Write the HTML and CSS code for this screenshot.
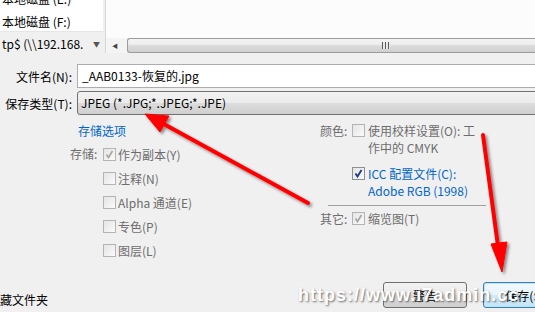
FILE: index.html
```html
<!DOCTYPE html>
<html lang="zh-CN">
<head>
    <meta charset="UTF-8">
    <meta name="viewport" content="width=device-width, initial-scale=1.0">
    <title>另存为</title>
    <link rel="stylesheet" href="styles.css">
</head>
<body>
    <div class="dialog">
        <!-- Навигация по папкам -->
        <div class="browser">
            <div class="tree">
                <ul class="tree-list">
                    <li>本地磁盘 (E:)</li>
                    <li>本地磁盘 (F:)</li>
                </ul>
                <div class="tree-foot">
                    <span>tp$ (\\192.168.</span>
                    <span class="drop">▼</span>
                </div>
            </div>
            <div class="pane">
                <div class="pane-view"></div>
                <div class="hscroll">
                    <span class="hscroll-btn">◀</span>
                    <div class="hscroll-thumb"><span class="grip"></span></div>
                </div>
            </div>
        </div>

        <div class="fields">
            <div class="field-row">
                <label class="field-label">文件名(N):</label>
                <div class="textbox">_AAB0133-恢复的.jpg</div>
            </div>
            <div class="field-row">
                <label class="field-label">保存类型(T):</label>
                <div class="combo">JPEG (*.JPG;*.JPEG;*.JPE)</div>
            </div>
        </div>

        <div class="options">
            <div class="opt-left">
                <a class="opt-link">存储选项</a>
                <div class="opt-group">
                    <span class="opt-label">存储:</span>
                    <ul class="check-list">
                        <li>
                            <span class="check">
                                <svg viewBox="0 0 11 11" width="11" height="11"><path d="M2.5 5.5 L4.5 8.5 L8.5 2" class="tick tick-gray"/></svg>
                            </span>作为副本(Y)
                        </li>
                        <li><span class="check"></span>注释(N)</li>
                        <li><span class="check"></span>Alpha 通道(E)</li>
                        <li><span class="check"></span>专色(P)</li>
                        <li><span class="check"></span>图层(L)</li>
                    </ul>
                </div>
            </div>

            <div class="opt-right">
                <div class="opt-item">
                    <span class="opt-label">颜色:</span>
                    <span class="check"></span>
                    <span class="opt-text">使用校样设置(O): 工<br>作中的 CMYK</span>
                </div>
                <div class="opt-item opt-item-gap">
                    <span class="opt-label"></span>
                    <span class="check">
                        <svg viewBox="0 0 11 11" width="11" height="11"><path d="M2.5 5.5 L4.5 8.5 L8.5 2" class="tick tick-blue"/></svg>
                    </span>
                    <span class="opt-text opt-text-blue">ICC 配置文件(C):<br>Adobe RGB (1998)</span>
                </div>
                <div class="opt-sep"></div>
                <div class="opt-item">
                    <span class="opt-label">其它:</span>
                    <span class="check">
                        <svg viewBox="0 0 11 11" width="11" height="11"><path d="M2.5 5.5 L4.5 8.5 L8.5 2" class="tick tick-gray"/></svg>
                    </span>
                    <span class="opt-text">缩览图(T)</span>
                </div>
            </div>
        </div>

        <div class="footer">
            <span class="hide-folders">藏文件夹</span>
            <div class="buttons">
                <button class="btn">警告</button>
                <button class="btn btn-default">保存(S)</button>
            </div>
        </div>

        <div class="watermark">https://www.i7admin.cc</div>

        <!-- Красные стрелки поверх диалога -->
        <svg class="arrows" viewBox="0 0 535 312" width="535" height="312">
            <defs>
                <filter id="shadow" x="-20%" y="-20%" width="140%" height="140%">
                    <feDropShadow dx="2" dy="2" stdDeviation="1.5" flood-color="#000" flood-opacity="0.45"/>
                </filter>
            </defs>
            <g filter="url(#shadow)" fill="#ff0000" stroke="#ff0000">
                <line x1="308" y1="203" x2="162" y2="123" stroke-width="4" stroke-linecap="round"/>
                <polygon points="145,114 169,116 160,132" stroke-width="1"/>
                <line x1="483" y1="135" x2="498" y2="246" stroke-width="4" stroke-linecap="round"/>
                <polygon points="502,272 491,244 507,242" stroke-width="1"/>
            </g>
        </svg>
    </div>
</body>
</html>
```

FILE: styles.css
```css
* {
    margin: 0;
    padding: 0;
    box-sizing: border-box;
}

body {
    width: 535px;
    height: 312px;
    overflow: hidden;
    background: #f0f0f0;
    font-family: "Noto Sans CJK SC", "Noto Sans", sans-serif;
    font-size: 12px;
    color: #000;
}

.dialog {
    position: relative;
    width: 535px;
    height: 312px;
    overflow: hidden;
}

/* Верхняя часть: дерево и список */
.browser {
    display: flex;
    height: 53px;
}

.tree {
    width: 103px;
    display: flex;
    flex-direction: column;
}

.tree-list {
    list-style: none;
    height: 32px;
    background: #fff;
    overflow: hidden;
    border-bottom: 1px solid #e6e6e6;
}

.tree-list li {
    height: 23px;
    line-height: 23px;
    padding-left: 2px;
    white-space: nowrap;
}

.tree-list li:first-child {
    margin-top: -13px;
}

.tree-foot {
    flex: 1;
    display: flex;
    align-items: center;
    justify-content: space-between;
    padding: 2px 3px 0 2px;
    white-space: nowrap;
}

.drop {
    font-size: 7px;
    color: #555;
}

.pane {
    flex: 1;
    display: flex;
    flex-direction: column;
    margin-left: 2px;
    border-left: 1px solid #d6d6d6;
}

.pane-view {
    height: 38px;
    background: #fcfcfc;
}

.hscroll {
    height: 15px;
    display: flex;
    background: #f4f4f4;
}

.hscroll-btn {
    width: 18px;
    display: flex;
    align-items: center;
    justify-content: center;
    font-size: 6px;
    color: #444;
}

.hscroll-thumb {
    flex: 1;
    margin-left: 3px;
    display: flex;
    align-items: center;
    padding-left: 254px;
    border: 1px solid #9c9c9c;
    border-right: none;
    border-radius: 3px 0 0 3px;
    background: linear-gradient(#f4f4f4, #ececec 45%, #dcdcdc 50%, #d0d0d0);
}

.grip {
    width: 8px;
    height: 7px;
    background: repeating-linear-gradient(90deg, #5a5a5a 0 1px, #e9e9e9 1px 3px);
}

/* Поля имени и типа */
.fields {
    display: flex;
    flex-direction: column;
    gap: 3px;
    padding-top: 11px;
}

.field-row {
    display: flex;
    align-items: center;
    height: 24px;
}

.field-label {
    flex: none;
    width: 77px;
    padding-right: 5px;
    text-align: right;
}

.textbox {
    flex: none;
    width: 480px;
    height: 24px;
    padding-left: 4px;
    line-height: 22px;
    background: #fff;
    border: 1px solid #abadb3;
    border-right: none;
}

.combo {
    flex: none;
    width: 480px;
    height: 24px;
    padding-left: 3px;
    line-height: 22px;
    border: 1px solid #707070;
    border-radius: 3px;
    background: linear-gradient(#f2f2f2, #ebebeb 50%, #dddddd 50%, #cfcfcf);
}

/* Параметры сохранения */
.options {
    display: grid;
    grid-template-columns: 300px 1fr;
    height: 167px;
    padding-top: 7px;
    color: #6d6d6d;
}

.opt-left {
    padding-left: 70px;
}

.opt-link {
    display: block;
    height: 18px;
    margin: 0 0 2px 8px;
    line-height: 18px;
    color: #0066cc;
}

.opt-group {
    display: flex;
}

.opt-label {
    flex: none;
    width: 33px;
    line-height: 24px;
}

.check-list {
    list-style: none;
}

.check-list li {
    height: 24px;
    display: flex;
    align-items: center;
    gap: 2px;
    white-space: nowrap;
}

.check {
    flex: none;
    width: 13px;
    height: 13px;
    display: flex;
    align-items: center;
    justify-content: center;
    border: 1px solid #b4b4b4;
    background: linear-gradient(135deg, #e4e4e4, #fbfbfb);
}

.tick {
    fill: none;
    stroke-width: 1.6;
}

.tick-gray {
    stroke: #a4a4a4;
}

.tick-blue {
    stroke: #1f3f8c;
    stroke-width: 1.9;
}

.opt-right {
    padding-left: 20px;
}

.opt-item {
    display: flex;
    align-items: flex-start;
    line-height: 17px;
    white-space: nowrap;
}

.opt-item .opt-label {
    width: 32px;
    line-height: 17px;
}

.opt-item .check {
    margin: 2px 3px 0 0;
}

.opt-item .check:has(.tick-blue) {
    border-color: #8e8f8f;
}

.opt-item-gap {
    margin-top: 9px;
}

.opt-text-blue {
    color: #0066cc;
}

.opt-sep {
    width: 158px;
    height: 1px;
    margin: 6px 0 4px 8px;
    background: #a0a0a0;
}

/* Нижняя строка с кнопками */
.footer {
    display: flex;
    height: 30px;
}

.hide-folders {
    margin-top: 9px;
    line-height: 17px;
    white-space: nowrap;
}

.buttons {
    display: flex;
    gap: 16px;
    width: 152px;
    margin-left: auto;
}

.btn {
    flex: none;
    width: 84px;
    height: 26px;
    font: inherit;
    color: #000;
    border: 1px solid #707070;
    border-radius: 3px;
    background: linear-gradient(#f2f2f2, #ebebeb 50%, #dddddd 50%, #cfcfcf);
}

.btn-default {
    border-color: #3c7fb1;
    box-shadow: inset 0 0 0 1px #b9e3f9;
    background: linear-gradient(#f1f9fe, #e5f4fc 50%, #d4ecfa 50%, #c4e4f7);
}

/* Водяной знак */
.watermark {
    position: absolute;
    left: 298px;
    top: 285px;
    font-family: "Liberation Sans", sans-serif;
    font-weight: bold;
    font-size: 18px;
    letter-spacing: 1px;
    color: #fff;
    text-shadow: 1px 1px 2px rgba(0, 0, 0, 0.55);
    white-space: nowrap;
}

.arrows {
    position: absolute;
    left: 0;
    top: 0;
    pointer-events: none;
}
```
